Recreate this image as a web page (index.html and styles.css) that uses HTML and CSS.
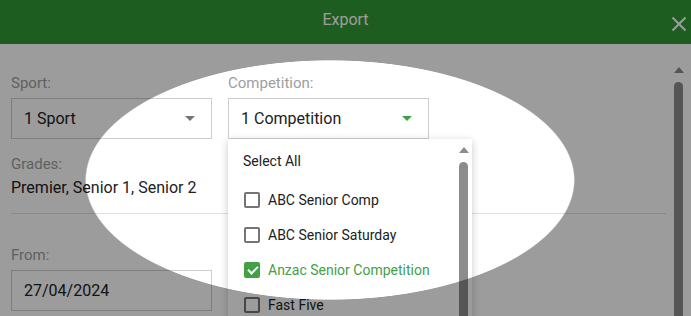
FILE: index.html
```html
<!DOCTYPE html>
<html lang="en">
<head>
    <meta charset="UTF-8">
    <meta name="viewport" content="width=device-width, initial-scale=1.0">
    <title>Export</title>
    <link rel="stylesheet" href="styles.css">
</head>
<body>

<header class="modal-head">
    <span></span>
    <h2>Export</h2>
    <button class="close-btn" aria-label="Close">
        <svg width="16" height="16" viewBox="0 0 16 16">
            <path d="M1.5 1.5 L14.5 14.5 M14.5 1.5 L1.5 14.5" stroke="#fff" stroke-width="2" fill="none"/>
        </svg>
    </button>
</header>

<div class="modal-body">
    <div class="form">
        <div class="row">
            <div class="field">
                <label>Sport:</label>
                <div class="select">
                    <span>1 Sport</span>
                    <i class="caret"></i>
                </div>
                <label class="grades-label">Grades:</label>
                <p class="grades">Premier, Senior 1, Senior 2</p>
            </div>
            <div class="field">
                <label>Competition:</label>
                <div class="select-wrap">
                    <div class="select open">
                        <span>1 Competition</span>
                        <i class="caret green"></i>
                    </div>
                    <!-- competition dropdown -->
                    <div class="dropdown">
                        <ul class="options">
                            <li class="select-all">Select All</li>
                            <li><span class="check"></span>ABC Senior Comp</li>
                            <li><span class="check"></span>ABC Senior Saturday</li>
                            <li class="checked"><span class="check"></span>Anzac Senior Competition</li>
                            <li><span class="check"></span>Fast Five</li>
                        </ul>
                        <div class="scrollbar small">
                            <i class="up"></i>
                            <div class="thumb"></div>
                        </div>
                    </div>
                </div>
            </div>
        </div>

        <hr>

        <div class="field">
            <label>From:</label>
            <div class="select">
                <span>27/04/2024</span>
            </div>
        </div>
    </div>

    <div class="scrollbar page">
        <i class="up"></i>
        <div class="thumb"></div>
    </div>
</div>

<!-- spotlight -->
<div class="spotlight"></div>

</body>
</html>
```

FILE: styles.css
```css
html, body {
    height: 100%;
    overflow: hidden;
}

body {
    margin: 0;
    font-family: Roboto, "Liberation Sans", sans-serif;
    background-color: #fff;
    color: #212121;
}

.modal-head {
    height: 44px;
    background-color: #309834;
    color: #fff;
    display: grid;
    grid-template-columns: 1fr auto 1fr;
    align-items: center;
}

.modal-head h2 {
    margin: 0;
    font-size: 16px;
    font-weight: 400;
    padding-bottom: 5px;
}

.close-btn {
    justify-self: end;
    background: none;
    border: none;
    padding: 0;
    margin: 4px 4px 0 0;
    width: 16px;
    height: 16px;
    display: flex;
}

.modal-body {
    display: flex;
}

.form {
    flex: 1;
    padding: 30px 0 0 11px;
}

.row {
    display: grid;
    grid-template-columns: 201px 201px;
    column-gap: 16px;
}

.field {
    width: 201px;
}

.select-wrap {
    position: relative;
}

label {
    display: block;
    font-size: 15px;
    line-height: 18px;
    color: #9e9e9e;
    margin-bottom: 6px;
}

.select {
    box-sizing: border-box;
    height: 41px;
    border: 1px solid #cfcfcf;
    display: flex;
    align-items: center;
    justify-content: space-between;
    padding: 0 16px 0 12px;
    font-size: 16px;
}

.caret {
    width: 0;
    height: 0;
    border-left: 5px solid transparent;
    border-right: 5px solid transparent;
    border-top: 5px solid #757575;
}

.caret.green {
    border-top-color: #43a047;
}

.grades-label {
    margin-top: 16px;
    margin-bottom: 5px;
}

.grades {
    margin: 0;
    font-size: 16px;
    line-height: 19px;
    white-space: nowrap;
}

hr {
    border: none;
    border-top: 1px solid #e0e0e0;
    margin: 16px 0 32px;
}

.dropdown {
    position: absolute;
    top: 100%;
    left: 0;
    width: 244px;
    height: 200px;
    background-color: #fff;
    box-shadow: 0 2px 8px rgba(0, 0, 0, 0.22);
    display: flex;
    z-index: 10;
}

.options {
    list-style: none;
    margin: 0;
    padding: 0;
    flex: 1;
    font-size: 14px;
}

.options li {
    height: 35px;
    display: flex;
    align-items: center;
    padding-left: 16px;
}

.options .select-all {
    height: 43px;
    padding-left: 15px;
}

.check {
    box-sizing: border-box;
    width: 16px;
    height: 16px;
    border: 2px solid #757575;
    border-radius: 2px;
    margin-right: 8px;
    position: relative;
}

.checked {
    color: #43a047;
}

.checked .check {
    background-color: #43a047;
    border-color: #43a047;
}

.checked .check::after {
    content: "";
    position: absolute;
    left: 4px;
    top: 0px;
    width: 4px;
    height: 8px;
    border: solid #fff;
    border-width: 0 2px 2px 0;
    transform: rotate(45deg);
}

.scrollbar {
    display: flex;
    flex-direction: column;
    align-items: center;
}

.scrollbar .up {
    width: 0;
    height: 0;
    border-left: 5px solid transparent;
    border-right: 5px solid transparent;
    border-bottom: 6px solid #8c8c8c;
}

.scrollbar .thumb {
    width: 9px;
    flex: 1;
    background-color: #8c8c8c;
    border-radius: 5px;
}

.scrollbar.small {
    width: 17px;
    padding: 8px 0 0;
}

.scrollbar.small .thumb {
    margin-top: 9px;
}

.scrollbar.page {
    width: 25px;
    height: 300px;
    padding: 23px 0 0;
}

.scrollbar.page .thumb {
    margin-top: 9px;
}

.spotlight {
    position: fixed;
    inset: 0;
    z-index: 100;
    pointer-events: none;
    background: radial-gradient(ellipse 245px 120px at 330px 180px, transparent 99.4%, rgba(0, 0, 0, 0.39) 100%);
}
```
